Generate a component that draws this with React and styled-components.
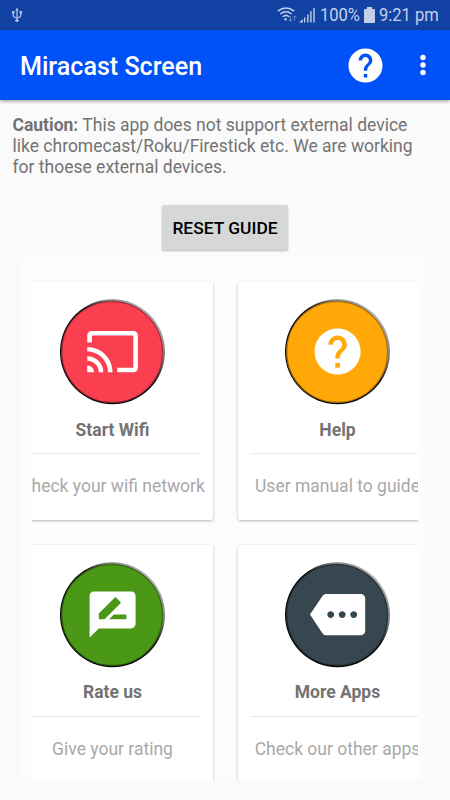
import React from "react";
import styled, { createGlobalStyle } from "styled-components";

const Global = createGlobalStyle`
  * { box-sizing: border-box; }
  body { margin: 0; background: #fafafa; font-family: Roboto, "Liberation Sans", sans-serif; }
`;

const Screen = styled.div`
  width: 450px;
  height: 800px;
  overflow: hidden;
  display: flex;
  flex-direction: column;
  background: #fafafa;
`;

const StatusBar = styled.div`
  height: 30px;
  flex: none;
  display: flex;
  align-items: center;
  justify-content: space-between;
  padding: 0 11px 0 12px;
  background: #1242a3;
  color: #c4d0ea;
`;

const StatusGroup = styled.div`
  display: flex;
  align-items: center;
  height: 30px;
`;

const StatusIcon = styled.svg`
  display: block;
  flex: none;
  margin-right: ${(p) => p.$after || 0}px;
`;

const StatusText = styled.div`
  width: ${(p) => p.$width}px;
  margin-right: ${(p) => p.$after || 0}px;
  font-size: 19px;
  line-height: 30px;
  white-space: nowrap;

  span {
    display: inline-block;
    transform: scaleX(${(p) => p.$squeeze});
    transform-origin: 0 50%;
  }
`;

const AppBar = styled.header`
  height: 70px;
  flex: none;
  display: flex;
  align-items: center;
  padding: 0 16.5px 0 20px;
  background: #0151f8;
  color: #fff;
  box-shadow: 0 1px 4px rgba(0, 0, 0, 0.4);
`;

const Title = styled.h1`
  flex: 1;
  margin: 0;
  padding-top: 3px;
  font-size: 25.1px;
  font-weight: 500;
  line-height: 30px;
  white-space: nowrap;
`;

const BarIcon = styled.svg`
  display: block;
  margin-left: ${(p) => p.$before || 0}px;
`;

const Caution = styled.p`
  flex: none;
  height: 63px;
  margin: 15px 12px 0 12.5px;
  font-size: 17.5px;
  line-height: 20.8px;
  color: #737373;
  white-space: nowrap;
`;

const ResetButton = styled.button`
  flex: none;
  align-self: center;
  width: 126px;
  height: 45px;
  margin: 27px 0 7px;
  padding: 1px 0 0;
  border: 0;
  border-radius: 2px;
  background: #d6d8d7;
  box-shadow: 0 1px 2px rgba(0, 0, 0, 0.28);
  color: #000;
  font: 500 17.4px/20px Roboto, sans-serif;
  white-space: nowrap;
`;

const Panel = styled.main`
  flex: none;
  width: 410px;
  height: 523px;
  margin-left: 20px;
  padding: 0 12px;
  background: #fcfcfc;
`;

const Viewport = styled.div`
  height: 523px;
  overflow: hidden;
  display: flex;
  justify-content: center;
`;

const Grid = styled.div`
  flex: none;
  display: grid;
  grid-template-columns: 200px 200px;
  grid-auto-rows: 238px;
  gap: 24.5px 25px;
  padding-top: 25px;
`;

const Card = styled.section`
  display: flex;
  flex-direction: column;
  align-items: center;
  padding-top: 17px;
  border-radius: 2.5px;
  background: #fff;
  box-shadow: 0 1px 3px rgba(0, 0, 0, 0.28);
`;

const Badge = styled.svg`
  display: block;
  flex: none;
`;

const CardTitle = styled.h2`
  margin: 12.5px 0 0;
  font-size: 17.5px;
  line-height: 24px;
  font-weight: 700;
  color: #737373;
  white-space: nowrap;
`;

const Divider = styled.hr`
  width: 175px;
  height: 1px;
  margin: 11.5px 0 0;
  border: 0;
  background: #e9e9e9;
`;

const CardNote = styled.p`
  margin: 20px 0 0;
  font-size: 17.5px;
  line-height: 24px;
  color: #a9a9a9;
  white-space: nowrap;
`;

const HELP =
  "M12 2C6.48 2 2 6.48 2 12s4.48 10 10 10 10-4.48 10-10S17.52 2 12 2zm1 17h-2v-2h2v2zm2.07-7.75l-.9.92C13.45 12.9 13 13.5 13 15h-2v-.5c0-1.1.45-2.1 1.17-2.83l1.24-1.26c.37-.36.59-.86.59-1.41 0-1.1-.9-2-2-2s-2 .9-2 2H8c0-2.21 1.79-4 4-4s4 1.79 4 4c0 .88-.36 1.68-.93 2.25z";
const CAST =
  "M21 3H3c-1.1 0-2 .9-2 2v3h2V5h18v14h-7v2h7c1.1 0 2-.9 2-2V5c0-1.1-.9-2-2-2zM1 18v3h3c0-1.66-1.34-3-3-3zm0-4v2c2.76 0 5 2.24 5 5h2c0-3.87-3.13-7-7-7zm0-4v2c4.97 0 9 4.03 9 9h2c0-6.08-4.93-11-11-11z";
const REVIEW =
  "M20 2H4c-1.1 0-1.99.9-1.99 2L2 22l4-4h14c1.1 0 2-.9 2-2V4c0-1.1-.9-2-2-2zM6 14v-2.47l6.88-6.88c.2-.2.51-.2.71 0l1.77 1.77c.2.2.2.51 0 .71L8.47 14H6zm12 0h-7.5l2-2H18v2z";
const MORE =
  "M22 3H7c-.69 0-1.23.35-1.59.88L0 12l5.41 8.11c.36.53.9.89 1.59.89h15c1.1 0 2-.9 2-2V5c0-1.1-.9-2-2-2zM9 13.5c-.83 0-1.5-.67-1.5-1.5s.67-1.5 1.5-1.5 1.5.67 1.5 1.5-.67 1.5-1.5 1.5zm5 0c-.83 0-1.5-.67-1.5-1.5s.67-1.5 1.5-1.5 1.5.67 1.5 1.5-.67 1.5-1.5 1.5zm5 0c-.83 0-1.5-.67-1.5-1.5s.67-1.5 1.5-1.5 1.5.67 1.5 1.5-.67 1.5-1.5 1.5z";

const cards = [
  { id: "wifi", title: "Start Wifi", note: "Check your wifi network", color: "#f93f50", icon: CAST },
  { id: "help", title: "Help", note: "User manual to guide", color: "#ffa808", icon: HELP },
  { id: "rate", title: "Rate us", note: "Give your rating", color: "#4b9716", icon: REVIEW },
  { id: "more", title: "More Apps", note: "Check our other apps", color: "#37474f", icon: MORE },
];

function CircleBadge({ id, color, icon }) {
  return (
    <Badge width="105" height="106" viewBox="0 0 105 106">
      <defs>
        <linearGradient id={`rim-${id}`} x1="0.15" y1="0.85" x2="0.85" y2="0.15">
          <stop offset="0" stopColor="#000" />
          <stop offset="0.6" stopColor="#111" />
          <stop offset="0.8" stopColor="#777" />
          <stop offset="1" stopColor="#aaa" />
        </linearGradient>
        <linearGradient id={`bevel-${id}`} x1="0.15" y1="0.85" x2="0.85" y2="0.15">
          <stop offset="0" stopColor="#000" stopOpacity="0.5" />
          <stop offset="0.4" stopColor="#000" stopOpacity="0.2" />
          <stop offset="1" stopColor="#000" stopOpacity="0.35" />
        </linearGradient>
      </defs>
      <circle cx="52.5" cy="52.7" r="52.5" fill={`url(#rim-${id})`} />
      <circle cx="52.1" cy="53" r="51" fill={color} />
      <circle cx="52.1" cy="53" r="50.3" fill="none" stroke={`url(#bevel-${id})`} strokeWidth="1.2" />
      <path transform="translate(25 25) scale(2.3)" fill="#fff" d={icon} />
    </Badge>
  );
}

export default function App() {
  return (
    <Screen>
      <Global />
      <StatusBar>
        <StatusIcon width="10" height="16" viewBox="0 0 10 16" fill="none" stroke="#aebfe5" strokeWidth="1.3">
          <path d="M5 2v11M1.2 5v3.2Q1.2 10.6 5 10.6Q8.8 10.6 8.8 8.2V5" />
          <path d="M5 .6l1.7 2.8H3.3z" fill="#aebfe5" stroke="none" />
          <path d="M0 4h2.5v2.4H0zM7.5 4H10v2.4H7.5z" fill="#aebfe5" stroke="none" />
          <circle cx="5" cy="13.4" r="1.7" fill="#aebfe5" stroke="none" />
        </StatusIcon>
        <StatusGroup>
          <StatusIcon $after={2} width="20" height="16" viewBox="0 0 20 16" fill="none" stroke="#c4d0ea" strokeWidth="1.5">
            <path d="M.8 4.2Q9-2.4 17.2 4.2M3.3 7Q9 2.4 14.7 7M5.8 9.7Q9 7 12.2 9.7" />
            <circle cx="8.5" cy="12.2" r="1.2" fill="#c4d0ea" stroke="none" />
            <path d="M13.5 9v5.2M11.8 12.5l1.7 1.9 1.7-1.9M17.6 14V9M15.9 10.7l1.7-1.9 1.7 1.9" stroke="#6684c6" strokeWidth="1" />
          </StatusIcon>
          <StatusIcon $after={4} width="17" height="16" viewBox="0 0 17 16" fill="#c4d0ea">
            <path d="M0 15.5l3.8-3.3v3.3zM5 10.5h1.3v5H5zM8.2 7.2h1.4v8.3H8.2zM11.2 4h1.4v11.5h-1.4zM14.3 1h1.4v14.5h-1.4z" />
          </StatusIcon>
          <StatusText $width={40} $after={4} $squeeze={0.87}><span>100%</span></StatusText>
          <StatusIcon $after={4.5} width="11" height="16" viewBox="0 0 11 16" fill="#c4d0ea">
            <path d="M3 0h5v2h2q1 0 1 1v12q0 1-1 1H1q-1 0-1-1V3q0-1 1-1h2z" />
          </StatusIcon>
          <StatusText $width={60} $squeeze={0.87}><span>9:21 pm</span></StatusText>
        </StatusGroup>
      </StatusBar>
      <AppBar>
        <Title>Miracast Screen</Title>
        <BarIcon width="41" height="41" viewBox="0 0 24 24" fill="#fff"><path d={HELP} /></BarIcon>
        <BarIcon $before={26} width="22" height="22" viewBox="0 0 22 22" fill="#fff">
          <circle cx="11" cy="3.5" r="2.7" />
          <circle cx="11" cy="11" r="2.7" />
          <circle cx="11" cy="18.5" r="2.7" />
        </BarIcon>
      </AppBar>
      <Caution>
        <b>Caution:</b> This app does not support external device<br />
        like chromecast/Roku/Firestick etc. We are working<br />
        for thoese external devices.
      </Caution>
      <ResetButton>RESET GUIDE</ResetButton>
      <Panel>
        <Viewport>
          <Grid>
            {cards.map((c) => (
              <Card key={c.id}>
                <CircleBadge id={c.id} color={c.color} icon={c.icon} />
                <CardTitle>{c.title}</CardTitle>
                <Divider />
                <CardNote>{c.note}</CardNote>
              </Card>
            ))}
          </Grid>
        </Viewport>
      </Panel>
    </Screen>
  );
}
